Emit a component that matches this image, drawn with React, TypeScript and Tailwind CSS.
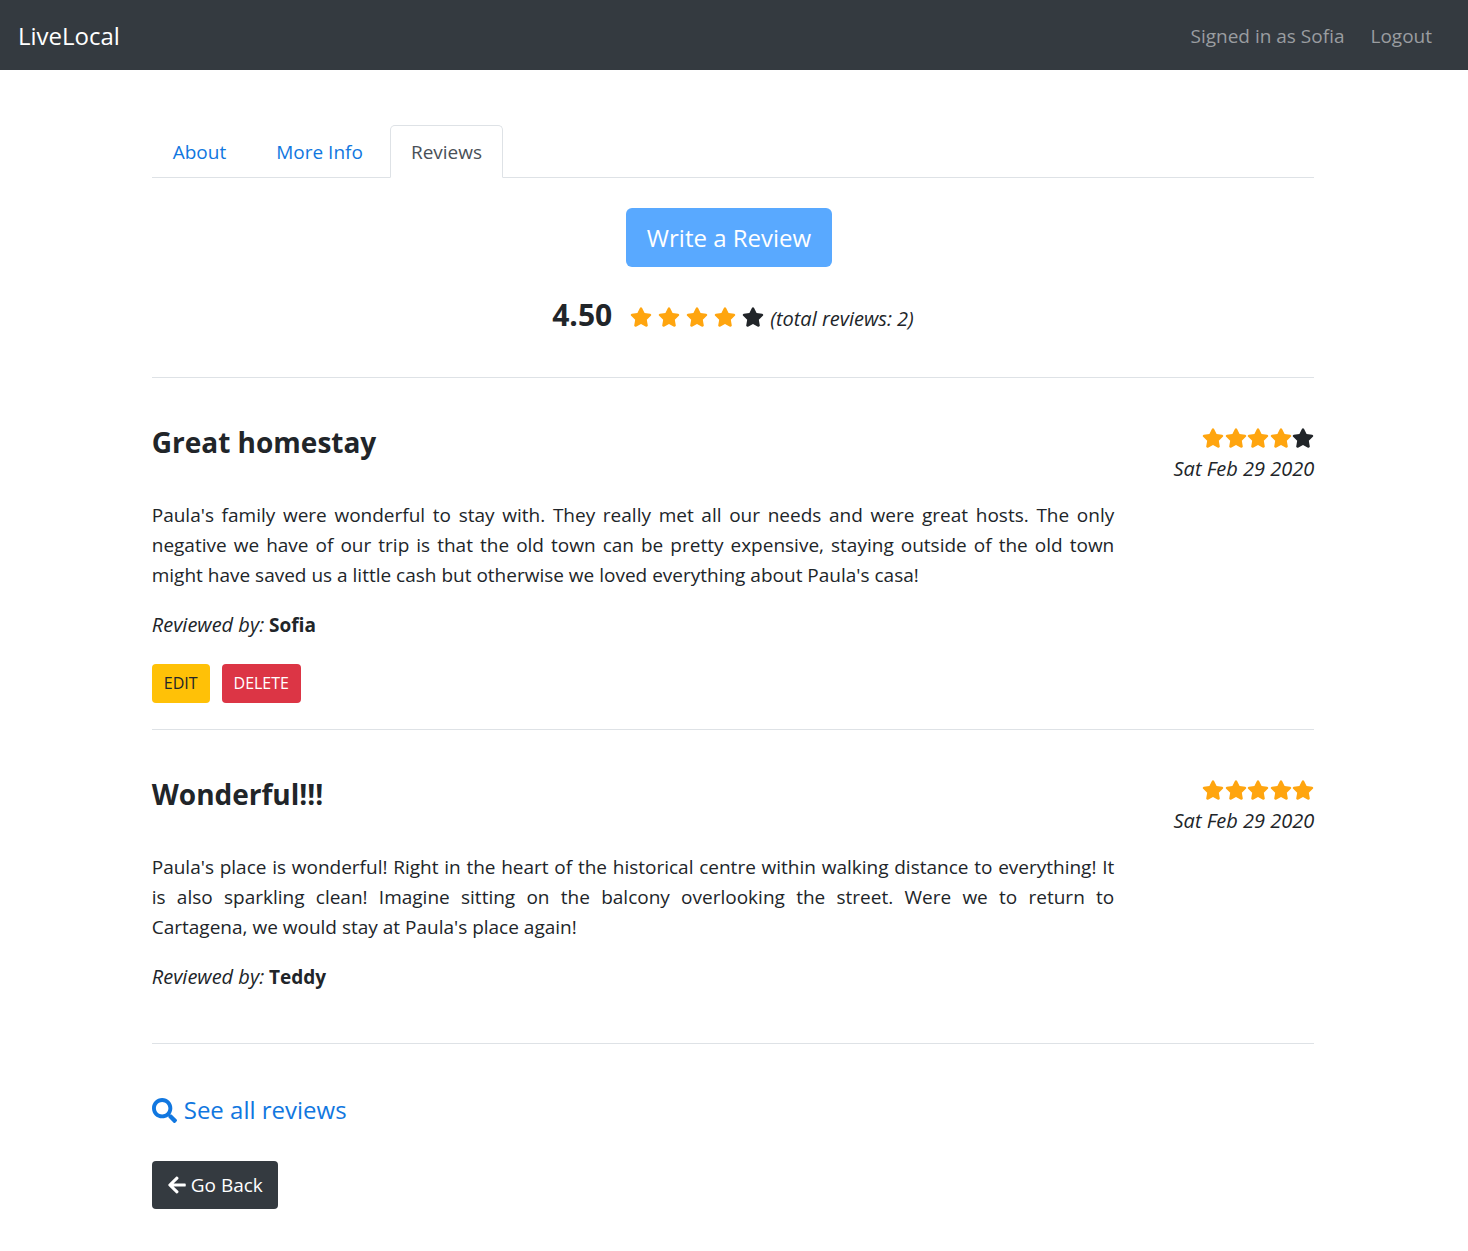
import { FaStar, FaSearch, FaArrowLeft } from "react-icons/fa";

type Review = {
  title: string;
  stars: number;
  date: string;
  text: string;
  author: string;
  own: boolean;
};

const reviews: Review[] = [
  {
    title: "Great homestay",
    stars: 4,
    date: "Sat Feb 29 2020",
    text: "Paula's family were wonderful to stay with. They really met all our needs and were great hosts. The only negative we have of our trip is that the old town can be pretty expensive, staying outside of the old town might have saved us a little cash but otherwise we loved everything about Paula's casa!",
    author: "Sofia",
    own: true,
  },
  {
    title: "Wonderful!!!",
    stars: 5,
    date: "Sat Feb 29 2020",
    text: "Paula's place is wonderful! Right in the heart of the historical centre within walking distance to everything! It is also sparkling clean! Imagine sitting on the balcony overlooking the street. Were we to return to Cartagena,\u00a0we would stay at Paula's place again!",
    author: "Teddy",
    own: false,
  },
];

function Stars({ count, spaced = false }: { count: number; spaced?: boolean }) {
  return (
    <span
      role="img"
      aria-label={`${count} of 5 stars`}
      className={spaced ? "flex gap-1.5 self-center pt-1" : "flex w-28 justify-between"}
    >
      {[1, 2, 3, 4, 5].map((n) => (
        <FaStar
          key={n}
          className={n <= count ? "h-5 w-[22px] text-[#ffa50f]" : "h-5 w-[22px] text-[#212529]"}
        />
      ))}
    </span>
  );
}

function ReviewItem({ review }: { review: Review }) {
  return (
    <article className={review.own ? "border-b border-[#dee2e6] pt-[50px] pb-[26px]" : "border-b border-[#dee2e6] pt-[50px] pb-[51px]"}>
      <div className="flex items-start justify-between">
        <h2 className="text-[28px] leading-7 font-bold">{review.title}</h2>
        <div className="flex flex-col items-end">
          <Stars count={review.stars} />
          <time className="mt-1.5 text-xl leading-[30px] italic">{review.date}</time>
        </div>
      </div>
      <p className="mt-4 mr-[200px] text-justify leading-[30px]">{review.text}</p>
      <p className="mt-5 leading-[30px]">
        <em className="text-xl leading-[30px]">Reviewed by:</em> <strong className="font-bold">{review.author}</strong>
      </p>
      {review.own && (
        <div className="mt-6 flex gap-3">
          <button type="button" className="rounded bg-[#ffc107] px-3 text-base leading-[39px]">
            EDIT
          </button>
          <button type="button" className="rounded bg-[#dc3545] px-3 text-base leading-[39px] text-white">
            DELETE
          </button>
        </div>
      )}
    </article>
  );
}

export default function App() {
  return (
    <div className="min-h-screen bg-white font-['Segoe_UI','Open_Sans','Noto_Sans',sans-serif] text-[19px] text-[#212529]">
      <header className="flex h-[70px] items-center justify-between bg-[#343a40] pt-0.5 pr-9 pl-[18px]">
        <a href="#" className="text-2xl text-white">LiveLocal</a>
        <nav className="flex gap-[26px] text-[#9a9da0]">
          <span>Signed in as Sofia</span>
          <a href="#">Logout</a>
        </nav>
      </header>
      <div className="pr-0.5">
        <main className="mx-auto w-[79.3%] pt-[55px] pb-10">
          <nav className="flex border-b border-[#dee2e6] leading-[30px]">
            <a href="#" className="px-[21px] pt-3 pb-2.5 text-[#1177e0]">About</a>
            <a href="#" className="ml-2 px-[21px] pt-3 pb-2.5 text-[#1177e0]">More Info</a>
            <a href="#" aria-current="page" className="-mb-px ml-1.5 rounded-t-[5px] border border-[#dee2e6] border-b-white px-5 pt-[11px] pb-2.5 text-[#495057]">
              Reviews
            </a>
          </nav>
          <div className="mt-[30px] flex justify-center pr-2">
            <button type="button" className="rounded-md bg-[#59a9ff] px-[21px] text-2xl leading-[59px] text-white">
              Write a Review
            </button>
          </div>
          <div className="flex items-baseline justify-center border-b border-[#dee2e6] pt-[29px] pb-[43px]">
            <strong className="mr-[18px] text-[30px] leading-[38px] font-bold">4.50</strong>
            <Stars count={4} spaced />
            <em className="ml-1.5 text-xl">(total reviews: 2)</em>
          </div>
          {reviews.map((review) => (
            <ReviewItem key={review.title} review={review} />
          ))}
          <a href="#" className="mt-12 flex w-fit items-center gap-[7px] text-2xl leading-9 font-medium text-[#1177e0]">
            <FaSearch className="size-[25px]" />
            See all reviews
          </a>
          <button type="button" className="mt-[33px] flex items-center gap-1 rounded bg-[#343a40] px-[15px] leading-[48px] text-white">
            <FaArrowLeft className="size-5" />
            Go Back
          </button>
        </main>
      </div>
    </div>
  );
}
